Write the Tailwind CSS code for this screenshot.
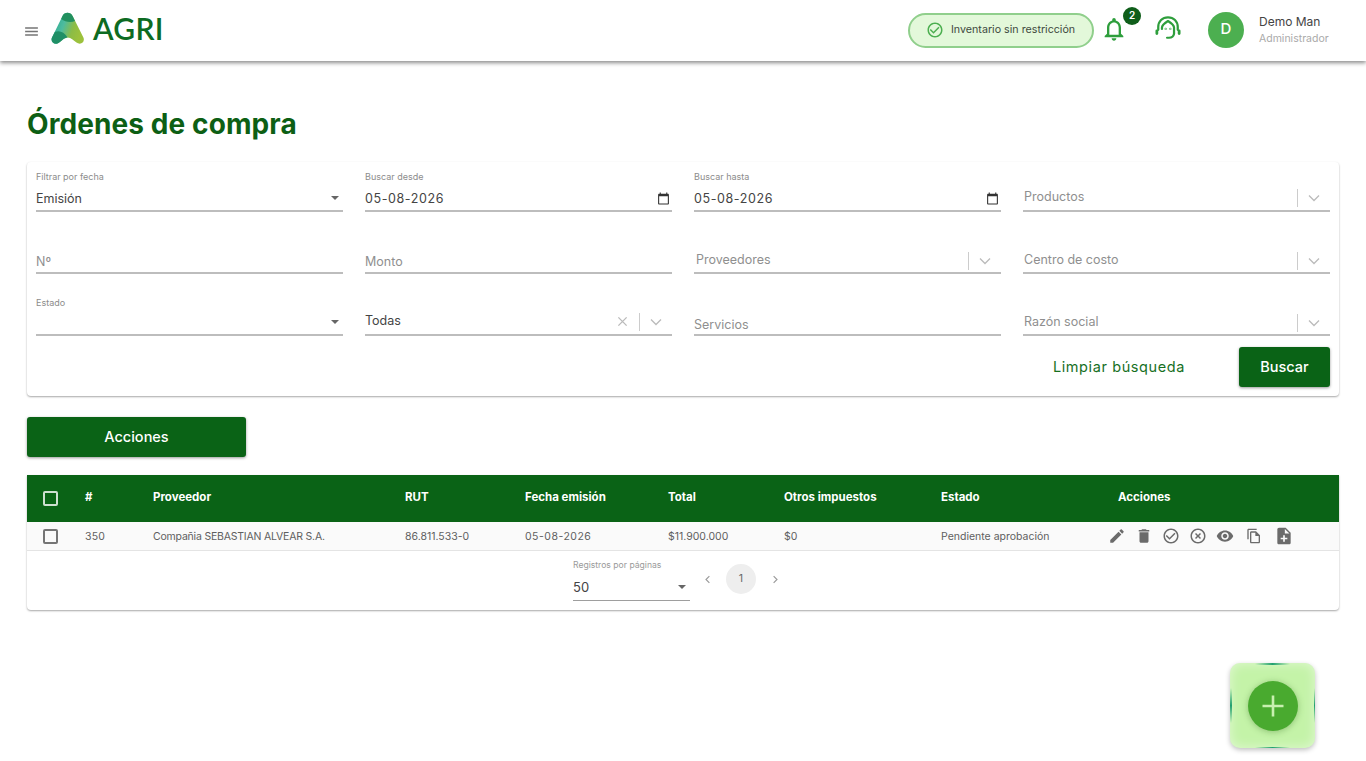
<!DOCTYPE html>
<html lang="es">
<head>
    <meta charset="UTF-8">
    <meta name="viewport" content="width=device-width, initial-scale=1.0">
    <title>Órdenes de compra</title>
    <script src="https://cdn.jsdelivr.net/npm/@tailwindcss/browser@4"></script>
</head>
<body class="bg-white font-['Inter',sans-serif] text-[#555] overflow-hidden h-[761px]">

    <!-- Header -->
    <header class="h-[61px] bg-white shadow-[0_2px_4px_rgba(0,0,0,0.45)] flex items-center pl-[23px] pr-[36px] relative">
        <svg class="w-[17px] h-[17px] mt-[1px]" viewBox="0 0 24 24" fill="#757575"><path d="M3 18h18v-2H3v2zm0-5h18v-2H3v2zm0-7v2h18V6H3z"/></svg>
        <svg class="w-[34px] h-[34px] ml-[11px] -mt-[6px]" viewBox="0 0 34 34">
            <defs>
                <linearGradient id="logoFill" x1="0" y1="0" x2="1" y2="0.35">
                    <stop offset="0" stop-color="#1ea58c"/>
                    <stop offset="0.45" stop-color="#4dbb9f"/>
                    <stop offset="0.75" stop-color="#8cbc45"/>
                    <stop offset="1" stop-color="#9cc13c"/>
                </linearGradient>
            </defs>
            <path d="M11.500 5C13.500 0.600 19.500 0.600 21.600 5L32.400 26.500C34.200 30.500 30.500 33.800 27 32.300C23 30.200 20 26.500 16.600 26.500C13 26.500 10.500 30.500 6.500 32.500C3 33.800 -0.800 30.500 1 26.500Z" fill="url(#logoFill)"/>
            <path d="M11.500 5C13.500 0.600 19.500 0.600 21.600 5L24 10C20 12 14 11 10.200 8Z" fill="#22905f"/>
            <path d="M1 26.500L3.800 21C8 19 13 20.500 16.600 26.500C13 26.500 10.500 30.500 6.500 32.500C3 33.800 -0.800 30.500 1 26.500Z" fill="#1f8f66"/>
        </svg>
        <span class="ml-[8px] font-['Lato',sans-serif] font-semibold text-[30px] leading-none text-[#0d6b22] -mt-[5px] tracking-[0.3px]">AGRI</span>

        <div class="ml-auto flex items-center">
            <div class="h-[35px] w-[186px] -mt-[1px] rounded-full bg-[#e3f8da] border-2 border-[#90cf8c] flex items-center pl-[16px] gap-[7px] text-[#3f4a3f] text-[10.7px]">
                <svg class="w-[18px] h-[18px]" viewBox="0 0 24 24" fill="#4caf50"><path d="M16.590 7.580 10 14.170l-3.590-3.580L5 12l5 5 8-8zM12 2C6.480 2 2 6.480 2 12s4.480 10 10 10 10-4.480 10-10S17.520 2 12 2zm0 18c-4.420 0-8-3.580-8-8s3.580-8 8-8 8 3.580 8 8-3.580 8-8 8z"/></svg>
                <span>Inventario sin restricción</span>
            </div>
            <div class="relative ml-[6px] w-[28px] h-[28px] -mt-[4px]">
                <svg class="w-[28px] h-[28px]" viewBox="0 0 24 24" fill="#2e9e3c"><path d="M12 22c1.100 0 2-.9 2-2h-4c0 1.100.9 2 2 2zm6-6v-5c0-3.070-1.630-5.640-4.500-6.320V4c0-.83-.67-1.500-1.500-1.500s-1.500.67-1.500 1.500v.68C7.640 5.360 6 7.920 6 11v5l-2 2v1h16v-1l-2-2zm-2 1H8v-6c0-2.480 1.510-4.500 4-4.500s4 2.020 4 4.500v6z"/></svg>
                <span class="absolute left-[23px] -top-[8px] w-[18px] h-[18px] rounded-full bg-[#0f5e1a] text-white text-[10px] font-semibold flex items-center justify-center">2</span>
            </div>
            <svg class="ml-[27px] w-[26px] h-[26px] -mt-[5px]" viewBox="0 0 28 28" fill="none" stroke="#2e9e3c" stroke-width="2.400" stroke-linecap="round" stroke-linejoin="round">
                <path d="M3.500 16V13C3.500 6.500 8 2.500 14 2.500S24.500 6.500 24.500 13v3"/>
                <path d="M7.500 15V13.500C7.500 11 10 9 14 6.500C18 9 20.500 11 20.500 13.500V20"/>
                <path d="M2 17v3M26 17v3" stroke-width="3"/>
                <path d="M20.500 20C20 23 18 24.500 15 24.500h-2"/>
                <circle cx="11.500" cy="15" r="0.300" stroke-width="1.800"/>
                <circle cx="16.500" cy="15" r="0.300" stroke-width="1.800"/>
            </svg>
            <div class="ml-[27px] w-[36px] h-[36px] -mt-[2px] rounded-full bg-[#4caf50] text-white text-[15px] font-medium flex items-center justify-center">D</div>
            <div class="ml-[15px] w-[71px]">
                <p class="text-[12px] leading-[16px] text-[#444] mb-[1px]">Demo Man</p>
                <p class="text-[10.5px] leading-[16px] text-[#aaa]">Administrador</p>
            </div>
        </div>
    </header>

    <main class="px-[27px]">
        <h1 class="mt-[44px] h-[38px] leading-[38px] text-[28px] tracking-[0.1px] font-bold text-[#0d5f14]">Órdenes de compra</h1>

        <!-- Filters -->
        <section class="mt-[19px] h-[234px] bg-white rounded-[4px] shadow-[0_1px_2px_rgba(0,0,0,0.35)] px-[9px]">
            <div class="grid grid-cols-4 gap-x-[22px] grid-rows-[50px_62px_62px]">

                <div class="flex flex-col justify-end border-b-2 border-[#bdbdbd] h-[50px]">
                    <label class="text-[9px] leading-[11px] text-[#8c8c8c]">Filtrar por fecha</label>
                    <div class="flex items-center justify-between h-[28px] pt-[7px] text-[12.5px] text-[#444]">
                        <span>Emisión</span>
                        <span class="w-0 h-0 border-x-[4px] border-x-transparent border-t-[4px] border-t-[#666] mr-[4px] mb-[4px]"></span>
                    </div>
                </div>
                <div class="flex flex-col justify-end border-b-2 border-[#bdbdbd] h-[50px]">
                    <label class="text-[9px] leading-[11px] text-[#8c8c8c]">Buscar desde</label>
                    <div class="flex items-center justify-between h-[28px] pt-[7px] text-[12.5px] text-[#444] tracking-[0.6px]">
                        <span>05-08-2026</span>
                        <svg class="w-[13px] h-[13px] mr-[2px] mb-[2px]" viewBox="0 0 24 24" fill="#333"><path d="M20 3h-1V1h-2v2H7V1H5v2H4c-1.100 0-2 .9-2 2v16c0 1.100.9 2 2 2h16c1.100 0 2-.9 2-2V5c0-1.100-.9-2-2-2zm0 18H4V8h16v13z"/></svg>
                    </div>
                </div>
                <div class="flex flex-col justify-end border-b-2 border-[#bdbdbd] h-[50px]">
                    <label class="text-[9px] leading-[11px] text-[#8c8c8c]">Buscar hasta</label>
                    <div class="flex items-center justify-between h-[28px] pt-[7px] text-[12.5px] text-[#444] tracking-[0.6px]">
                        <span>05-08-2026</span>
                        <svg class="w-[13px] h-[13px] mr-[2px] mb-[2px]" viewBox="0 0 24 24" fill="#333"><path d="M20 3h-1V1h-2v2H7V1H5v2H4c-1.100 0-2 .9-2 2v16c0 1.100.9 2 2 2h16c1.100 0 2-.9 2-2V5c0-1.100-.9-2-2-2zm0 18H4V8h16v13z"/></svg>
                    </div>
                </div>
                <div class="self-end flex items-center h-[30px] border-b-2 border-[#bdbdbd] text-[12.5px] text-[#8f8f8f] pl-[1px] pt-[3px]">
                    <span>Productos</span>
                    <span class="ml-auto w-px h-[18px] bg-[#ccc]"></span>
                    <svg class="w-[12px] h-[12px] ml-[10px] mr-[10px]" viewBox="0 0 12 12" fill="none" stroke="#bbb" stroke-width="1.300"><path d="M1 3.500l5 5 5-5"/></svg>
                </div>

                <div class="self-end border-b-2 border-[#bdbdbd] h-[30px] flex items-center text-[12.5px] text-[#8f8f8f] pt-[8px]">Nº</div>
                <div class="self-end border-b-2 border-[#bdbdbd] h-[30px] flex items-center text-[12.5px] text-[#8f8f8f] pt-[8px]">Monto</div>
                <div class="self-end flex items-center h-[30px] border-b-2 border-[#bdbdbd] text-[12.5px] text-[#8f8f8f] pl-[2px] pt-[5px]">
                    <span>Proveedores</span>
                    <span class="ml-auto w-px h-[18px] bg-[#ccc]"></span>
                    <svg class="w-[12px] h-[12px] ml-[10px] mr-[10px]" viewBox="0 0 12 12" fill="none" stroke="#bbb" stroke-width="1.300"><path d="M1 3.500l5 5 5-5"/></svg>
                </div>
                <div class="self-end flex items-center h-[30px] border-b-2 border-[#bdbdbd] text-[12.5px] text-[#8f8f8f] pl-[1px] pt-[5px]">
                    <span>Centro de costo</span>
                    <span class="ml-auto w-px h-[18px] bg-[#ccc]"></span>
                    <svg class="w-[12px] h-[12px] ml-[10px] mr-[10px]" viewBox="0 0 12 12" fill="none" stroke="#bbb" stroke-width="1.300"><path d="M1 3.500l5 5 5-5"/></svg>
                </div>

                <div class="flex flex-col justify-end border-b-2 border-[#bdbdbd] h-[50px] self-end">
                    <label class="text-[9px] leading-[11px] text-[#8c8c8c]">Estado</label>
                    <div class="flex items-center justify-end h-[26px] pt-[2px]">
                        <span class="w-0 h-0 border-x-[4px] border-x-transparent border-t-[4px] border-t-[#666] mr-[4px]"></span>
                    </div>
                </div>
                <div class="self-end flex items-center h-[30px] border-b-2 border-[#bdbdbd] text-[12.5px] text-[#444] pt-[3px]">
                    <span>Todas</span>
                    <svg class="ml-auto w-[11px] h-[11px] mr-[11px]" viewBox="0 0 12 12" fill="none" stroke="#bbb" stroke-width="1.500"><path d="M1.500 1.500l9 9M10.500 1.500l-9 9"/></svg>
                    <span class="w-px h-[18px] bg-[#ccc]"></span>
                    <svg class="w-[12px] h-[12px] ml-[10px] mr-[10px]" viewBox="0 0 12 12" fill="none" stroke="#bbb" stroke-width="1.300"><path d="M1 3.500l5 5 5-5"/></svg>
                </div>
                <div class="self-end border-b-2 border-[#bdbdbd] h-[30px] flex items-center text-[12.5px] text-[#8f8f8f] pt-[11px]">Servicios</div>
                <div class="self-end flex items-center h-[30px] border-b-2 border-[#bdbdbd] text-[12.5px] text-[#8f8f8f] pl-[1px] pt-[5px]">
                    <span>Razón social</span>
                    <span class="ml-auto w-px h-[18px] bg-[#ccc]"></span>
                    <svg class="w-[12px] h-[12px] ml-[10px] mr-[10px]" viewBox="0 0 12 12" fill="none" stroke="#bbb" stroke-width="1.300"><path d="M1 3.500l5 5 5-5"/></svg>
                </div>
            </div>

            <div class="flex justify-end items-center mt-[11px]">
                <button class="text-[14.5px] font-normal text-[#17701f] tracking-[0.6px] mr-[54px]">Limpiar búsqueda</button>
                <button class="w-[91px] h-[40px] rounded-[3px] bg-[#0a6316] text-white text-[14.5px] font-medium shadow-[0_1px_3px_rgba(0,0,0,0.4)]">Buscar</button>
            </div>
        </section>

        <button class="mt-[21px] w-[219px] h-[40px] rounded-[3px] bg-[#0a6316] text-white text-[14.5px] font-medium shadow-[0_1px_3px_rgba(0,0,0,0.4)] block">Acciones</button>

        <!-- Orders table -->
        <section class="mt-[18px] h-[135px] bg-white rounded-b-[4px] shadow-[0_1px_2px_rgba(0,0,0,0.35)]">
            <div class="h-[47px] pb-[1px] bg-[#0a6316] text-white text-[11.5px] font-bold items-center grid grid-cols-[58px_68px_252px_120px_143px_116px_157px_177px_1fr]">
                <span class="ml-[16px] mt-[1px] w-[11px] h-[11px] box-content border-2 border-white/80 rounded-[2px]"></span>
                <span>#</span>
                <span>Proveedor</span>
                <span>RUT</span>
                <span>Fecha emisión</span>
                <span>Total</span>
                <span>Otros impuestos</span>
                <span>Estado</span>
                <span>Acciones</span>
            </div>
            <div class="h-[29px] pt-[2px] bg-[#fafafa] border-b border-[#e4e4e4] text-[10.5px] text-[#5f5f5f] items-center grid grid-cols-[58px_68px_252px_120px_143px_116px_157px_177px_1fr]">
                <span class="ml-[16px] -mt-[2px] w-[11px] h-[11px] box-content border-2 border-[#757575] rounded-[2px]"></span>
                <span class="tracking-[0.2px]">350</span>
                <span class="tracking-[-0.2px]">Compañia SEBASTIAN ALVEAR S.A.</span>
                <span>86.811.533-0</span>
                <span class="tracking-[0.5px]">05-08-2026</span>
                <span>$11.900.000</span>
                <span>$0</span>
                <span>Pendiente aprobación</span>
                <div class="flex items-center -ml-[10px] -mt-[2px] gap-[9px]">
                    <svg class="w-[18px] h-[18px]" viewBox="0 0 24 24" fill="#6b6b6b"><path d="M3 17.250V21h3.750L17.810 9.940l-3.750-3.750L3 17.250zM20.710 7.040c.39-.39.39-1.020 0-1.410l-2.340-2.340c-.39-.39-1.020-.39-1.410 0l-1.830 1.830 3.750 3.750 1.830-1.830z"/></svg>
                    <svg class="w-[18px] h-[18px]" viewBox="0 0 24 24" fill="#6b6b6b"><path d="M6 19c0 1.100.9 2 2 2h8c1.100 0 2-.9 2-2V7H6v12zM19 4h-3.500l-1-1h-5l-1 1H5v2h14V4z"/></svg>
                    <svg class="w-[18px] h-[18px]" viewBox="0 0 24 24" fill="#6b6b6b"><path d="M16.590 7.580 10 14.170l-3.590-3.580L5 12l5 5 8-8zM12 2C6.480 2 2 6.480 2 12s4.480 10 10 10 10-4.480 10-10S17.520 2 12 2zm0 18c-4.420 0-8-3.580-8-8s3.580-8 8-8 8 3.580 8 8-3.580 8-8 8z"/></svg>
                    <svg class="w-[18px] h-[18px]" viewBox="0 0 24 24" fill="#6b6b6b"><path d="M14.590 8 12 10.590 9.410 8 8 9.410 10.590 12 8 14.590 9.410 16 12 13.410 14.590 16 16 14.590 13.410 12 16 9.410 14.590 8zM12 2C6.470 2 2 6.470 2 12s4.470 10 10 10 10-4.470 10-10S17.530 2 12 2zm0 18c-4.410 0-8-3.590-8-8s3.590-8 8-8 8 3.590 8 8-3.590 8-8 8z"/></svg>
                    <svg class="w-[18px] h-[18px]" viewBox="0 0 24 24" fill="#6b6b6b"><path d="M12 4.500C7 4.500 2.730 7.610 1 12c1.730 4.390 6 7.500 11 7.500s9.270-3.110 11-7.500c-1.730-4.390-6-7.500-11-7.500zM12 17c-2.760 0-5-2.240-5-5s2.240-5 5-5 5 2.240 5 5-2.240 5-5 5zm0-8c-1.660 0-3 1.340-3 3s1.340 3 3 3 3-1.340 3-3-1.340-3-3-3z"/></svg>
                    <svg class="w-[16px] h-[16px] ml-[3px]" viewBox="0 0 24 24" fill="#6b6b6b"><path d="M16 1H4c-1.100 0-2 .9-2 2v14h2V3h12V1zm-1 4H8c-1.100 0-1.990.9-1.990 2L6 21c0 1.100.89 2 1.990 2H19c1.100 0 2-.9 2-2V11l-6-6zM8 21V7h6v5h5v9H8z"/></svg>
                    <svg class="w-[20px] h-[20px] ml-[3px]" viewBox="0 0 24 24" fill="#6b6b6b"><path d="M14 2H6c-1.100 0-1.990.9-1.990 2L4 20c0 1.100.89 2 1.990 2H18c1.100 0 2-.9 2-2V8l-6-6zm2 14h-3v3h-2v-3H8v-2h3v-3h2v3h3v2zm-3-7V3.500L18.500 9H13z"/></svg>
                </div>
            </div>

            <!-- Pagination -->
            <div class="flex pl-[546px]">
                <div class="w-[117px] h-[36px] mt-[14px] flex flex-col border-b border-[#9e9e9e]">
                    <label class="text-[8.6px] leading-[11px] text-[#9a9a9a] whitespace-nowrap -mt-[5px]">Registros por páginas</label>
                    <div class="flex items-center justify-between mt-[7px] text-[13px] text-[#444]">
                        <span>50</span>
                        <span class="w-0 h-0 border-x-[4px] border-x-transparent border-t-[4px] border-t-[#666] mr-[4px] mb-[1px]"></span>
                    </div>
                </div>
                <div class="flex items-center h-[30px] mt-[13px] ml-[13px] text-[#888]">
                    <svg class="w-[9px] h-[9px]" viewBox="0 0 12 12" fill="none" stroke="#999" stroke-width="1.500"><path d="M8.500 1.500L4 6l4.500 4.500"/></svg>
                    <span class="ml-[14px] w-[30px] h-[30px] rounded-full bg-[#eeeeee] text-[10.5px] text-[#666] flex items-center justify-center">1</span>
                    <svg class="ml-[15px] w-[9px] h-[9px]" viewBox="0 0 12 12" fill="none" stroke="#999" stroke-width="1.500"><path d="M3.500 1.500L8 6l-4.500 4.500"/></svg>
                </div>
            </div>
        </section>
    </main>

    <!-- Floating add button -->
    <button class="fixed left-[1230px] top-[663px] w-[85px] h-[85px] rounded-[10px] bg-[#c4f3a8] shadow-[0_2px_5px_rgba(0,0,0,0.25),inset_0_0_12px_rgba(255,255,255,0.5)] flex items-center justify-center">
        <span class="absolute top-0 left-[25px] right-[25px] h-[1.5px] bg-linear-to-r from-transparent via-[#22a070] to-transparent"></span>
        <span class="absolute bottom-0 left-[25px] right-[25px] h-[1.5px] bg-linear-to-r from-transparent via-[#22a070] to-transparent"></span>
        <span class="absolute left-0 top-[25px] bottom-[25px] w-[1.5px] bg-linear-to-b from-transparent via-[#22a070] to-transparent"></span>
        <span class="absolute right-0 top-[25px] bottom-[25px] w-[1.5px] bg-linear-to-b from-transparent via-[#22a070] to-transparent"></span>
        <span class="w-[50px] h-[50px] rounded-full bg-[#49aa2f] shadow-[0_1px_6px_rgba(60,120,40,0.4)] flex items-center justify-center">
            <svg class="w-[24px] h-[24px]" viewBox="0 0 24 24" fill="none" stroke="#c8f0b0" stroke-width="2.600"><path d="M12 1.500v21M1.500 12h21"/></svg>
        </span>
    </button>

</body>
</html>
